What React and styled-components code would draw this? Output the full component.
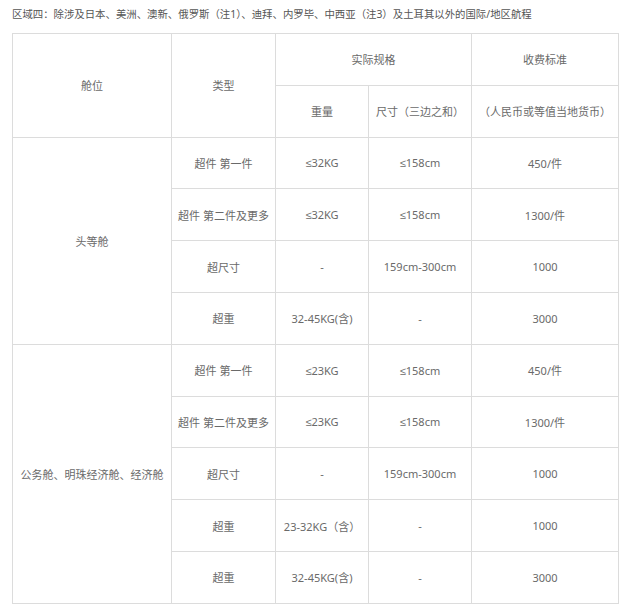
import React from 'react';
import styled, { createGlobalStyle } from 'styled-components';

const GlobalStyle = createGlobalStyle`
	html, body {
		margin: 0;
		padding: 0;
		background: #fff;
	}
	body {
		font-family: "Noto Sans", "Liberation Sans", "Noto Sans CJK SC", sans-serif;
	}
`;

const Page = styled.div`
	width: 640px;
	padding: 6px 0 0 12px;
	box-sizing: border-box;
`;

const Title = styled.p`
	margin: 0;
	height: 27px;
	font-size: 10.4px;
	line-height: 16px;
	color: #555;
`;

const Table = styled.table`
	width: 606px;
	border-collapse: collapse;
	table-layout: fixed;
	background: #fff;
`;

const Row = styled.tr`
	height: 51.8px;
`;

const Cell = styled.td`
	border: 1px solid #dcdcdc;
	padding: 0;
	text-align: center;
	vertical-align: middle;
	font-size: 11px;
	color: #6a6a6a;
	white-space: nowrap;
`;

const cols = [159, 104, 93, 103, 147];

const groups = [
	{
		cabin: '头等舱',
		rows: [
			['超件 第一件', '≤32KG', '≤158cm', '450/件'],
			['超件 第二件及更多', '≤32KG', '≤158cm', '1300/件'],
			['超尺寸', '-', '159cm-300cm', '1000'],
			['超重', '32-45KG(含)', '-', '3000'],
		],
	},
	{
		cabin: '公务舱、明珠经济舱、经济舱',
		rows: [
			['超件 第一件', '≤23KG', '≤158cm', '450/件'],
			['超件 第二件及更多', '≤23KG', '≤158cm', '1300/件'],
			['超尺寸', '-', '159cm-300cm', '1000'],
			['超重', '23-32KG（含）', '-', '1000'],
			['超重', '32-45KG(含)', '-', '3000'],
		],
	},
];

export default function App() {
	return (
		<Page>
			<GlobalStyle />
			<Title>区域四：除涉及日本、美洲、澳新、俄罗斯（注1）、迪拜、内罗毕、中西亚（注3）及土耳其以外的国际/地区航程</Title>
			<Table>
				<colgroup>
					{cols.map((w, i) => (
						<col key={i} style={{ width: w }} />
					))}
				</colgroup>
				<tbody>
					<Row>
						<Cell rowSpan={2}>舱位</Cell>
						<Cell rowSpan={2}>类型</Cell>
						<Cell colSpan={2}>实际规格</Cell>
						<Cell>收费标准</Cell>
					</Row>
					<Row>
						<Cell>重量</Cell>
						<Cell>尺寸（三边之和）</Cell>
						<Cell>（人民币或等值当地货币）</Cell>
					</Row>
					{groups.map((g) =>
						g.rows.map((r, i) => (
							<Row key={g.cabin + i}>
								{i === 0 && <Cell rowSpan={g.rows.length}>{g.cabin}</Cell>}
								{r.map((v, j) => (
									<Cell key={j}>{v}</Cell>
								))}
							</Row>
						))
					)}
				</tbody>
			</Table>
		</Page>
	);
}
